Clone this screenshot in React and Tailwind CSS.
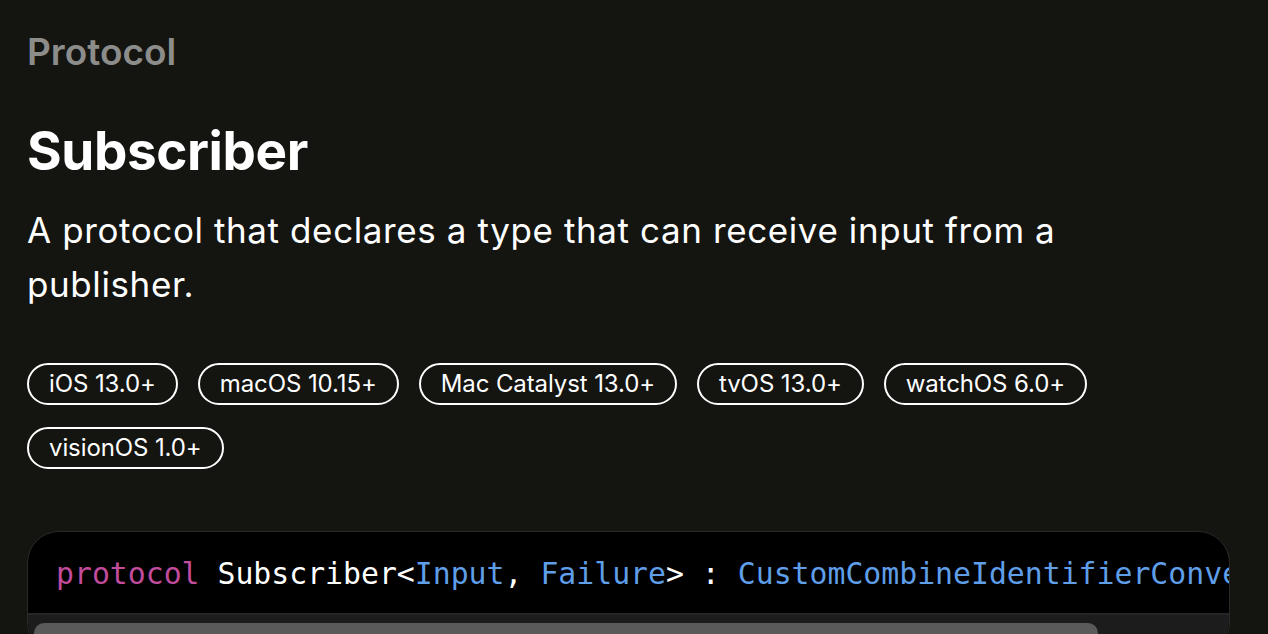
const PLATFORMS = [
  "iOS 13.0+",
  "macOS 10.15+",
  "Mac Catalyst 13.0+",
  "tvOS 13.0+",
  "watchOS 6.0+",
  "visionOS 1.0+",
];

function Pill({ label }) {
  return (
    <span className="inline-flex items-center h-[42px] px-[20px] rounded-full border-2 border-white text-[24px] text-white leading-none tracking-[-0.1px]">
      {label}
    </span>
  );
}

function Declaration() {
  return (
    <div className="mt-[62px] rounded-[32px] border border-[#2a2a2a] bg-black overflow-hidden">
      <div className="overflow-hidden whitespace-nowrap pl-[28px] pt-[24px] h-[81px] text-[29.8px] leading-[36px] font-['DejaVu_Sans_Mono',monospace] text-white">
        <span className="text-[#c14b9c]">protocol</span> Subscriber&lt;
        <span className="text-[#5f9ee8]">Input</span>,{" "}
        <span className="text-[#5f9ee8]">Failure</span>&gt; :{" "}
        <span className="text-[#5f9ee8]">CustomCombineIdentifierConvertible</span>
      </div>
      <div className="h-[40px] border-t-2 border-[#262626] bg-[#1c1c1c] pt-[8px] px-[6px]">
        <div className="h-[20px] w-[1064px] rounded-full bg-[#5a5a5a]" />
      </div>
    </div>
  );
}

export default function App() {
  return (
    <div className="h-[634px] overflow-hidden bg-[#141411] font-['Inter',sans-serif] pl-[27px] pr-[38px] pt-[30px]">
      <div className="text-[37px] font-semibold text-[#8c8c8a] leading-[44px]">Protocol</div>
      <h1 className="mt-[47px] text-[53px] font-bold text-white leading-[60px] tracking-[-0.4px]">Subscriber</h1>
      <p className="mt-[22px] text-[35px] text-white leading-[54px] tracking-[0.6px] max-w-[1120px]">
        A protocol that declares a type that can receive input from a publisher.
      </p>
      <div className="mt-[52px] flex flex-wrap gap-x-[20px] gap-y-[22px]">
        {PLATFORMS.map((p) => (
          <Pill key={p} label={p} />
        ))}
      </div>
      <Declaration />
    </div>
  );
}
